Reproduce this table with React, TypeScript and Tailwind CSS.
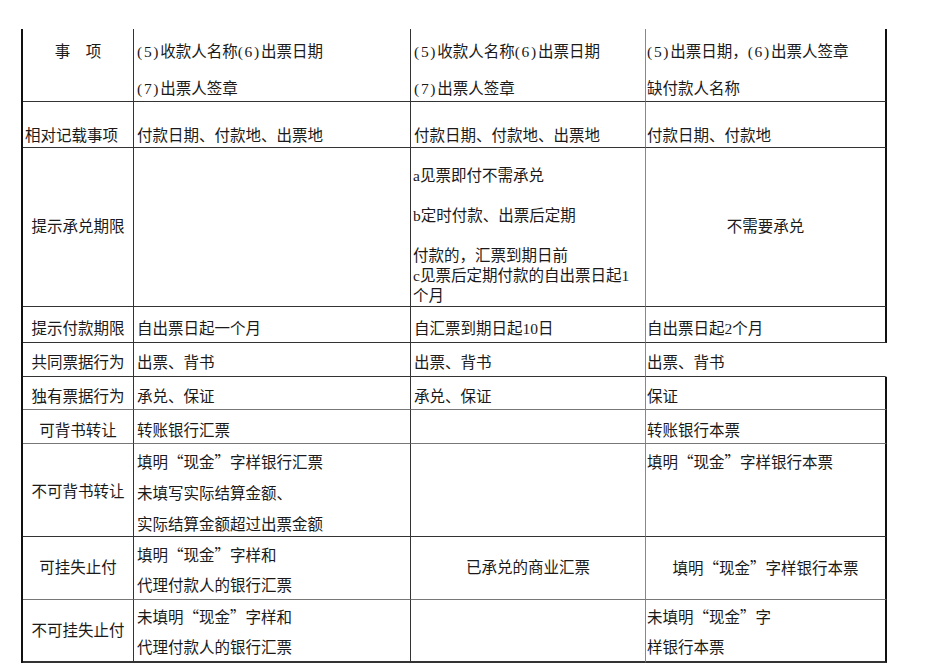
import React from "react";

const Q = ({ c }: { c: string }) => (
  <span className="[font-family:'Noto_Sans_CJK_SC',sans-serif] [font-feature-settings:'fwid']">{c}</span>
);

const P = ({ n }: { n: string }) => (
  <span className="tracking-[1.7px]">({n})</span>
);

const XJ = ({ pre = "", post }: { pre?: string; post: string }) => (
  <>
    {pre}
    <Q c="“" />现金<Q c="”" />
    {post}
  </>
);

export default function App() {
  const dk = "border-[#333]";
  return (
    <div className="w-[950px] h-[672px] bg-white overflow-hidden text-[15.5px] text-[#1a1a1a] [font-family:'Liberation_Serif','Noto_Sans_CJK_SC',serif] whitespace-nowrap">
      <div className="ml-[21px] mt-[29px] w-[866px] border-l-2 border-l-[#111] grid grid-cols-[111px_277px_235px_241px] grid-rows-[73px_46px_159px_36px_34px_33px_34px_93px_63px_63px]">
        {/* Row 1 */}
        <div className={`border-r border-b ${dk} flex justify-center pt-[4px] leading-[37px]`}>事　项</div>
        <div className={`border-r border-b ${dk} pl-[3px] pt-[4px] leading-[37px]`}>
          <div><P n="5" />收款人名称<P n="6" />出票日期</div>
          <div><P n="7" />出票人签章</div>
        </div>
        <div className={`border-r border-b border-r-[#888] border-b-[#333] pl-[3px] pt-[4px] leading-[37px]`}>
          <div><P n="5" />收款人名称<P n="6" />出票日期</div>
          <div><P n="7" />出票人签章</div>
        </div>
        <div className={`border-r-2 border-r-[#111] border-b border-b-[#333] pl-[1px] pt-[4px] leading-[37px]`}>
          <div><P n="5" />出票日期，<P n="6" />出票人签章</div>
          <div>缺付款人名称</div>
        </div>

        {/* Row 2 */}
        <div className={`border-r border-b ${dk} flex items-end pl-[2px] pb-[1px] leading-[20px]`}>相对记载事项</div>
        <div className={`border-r border-b ${dk} flex items-end pl-[3px] pb-[1px] leading-[20px]`}>付款日期、付款地、出票地</div>
        <div className="border-r border-b border-r-[#888] border-b-[#333] flex items-end pl-[3px] pb-[1px] leading-[20px]">付款日期、付款地、出票地</div>
        <div className="border-r-2 border-r-[#111] border-b border-b-[#333] flex items-end pl-[1px] pb-[1px] leading-[20px]">付款日期、付款地</div>

        {/* Row 3 */}
        <div className={`border-r border-b ${dk} flex items-center justify-center`}>提示承兑期限</div>
        <div className={`border-r border-b ${dk}`}></div>
        <div className="border-r border-b border-r-[#888] border-b-[#333] flex flex-col justify-end pl-[2px] leading-[20px]">
          <div>a见票即付不需承兑</div>
          <div className="h-[20px]"></div>
          <div>b定时付款、出票后定期</div>
          <div className="h-[20px]"></div>
          <div>付款的，汇票到期日前</div>
          <div>c见票后定期付款的自出票日起1</div>
          <div>个月</div>
        </div>
        <div className="border-r-2 border-r-[#111] border-b border-b-[#333] flex items-center justify-center">不需要承兑</div>

        {/* Row 4 */}
        <div className={`border-r border-b ${dk} flex items-end justify-center pb-[3px] leading-[20px]`}>提示付款期限</div>
        <div className={`border-r border-b ${dk} flex items-end pl-[3px] pb-[3px] leading-[20px]`}>自出票日起一个月</div>
        <div className="border-r border-b border-r-[#888] border-b-[#333] flex items-end pl-[3px] pb-[3px] leading-[20px]">自汇票到期日起10日</div>
        <div className="border-r-2 border-r-[#111] border-b border-b-[#333] flex items-end pl-[1px] pb-[3px] leading-[20px]">自出票日起2个月</div>

        {/* Row 5 */}
        <div className={`border-r border-b ${dk} flex items-end justify-center pb-[3px] leading-[20px]`}>共同票据行为</div>
        <div className={`border-r border-b ${dk} flex items-end pl-[3px] pb-[3px] leading-[20px]`}>出票、背书</div>
        <div className="border-r border-b border-r-[#888] border-b-[#333] flex items-end pl-[3px] pb-[3px] leading-[20px]">出票、背书</div>
        <div className="border-r-2 border-r-transparent border-b border-b-[#333] flex items-end pl-[1px] pb-[3px] leading-[20px]">出票、背书</div>

        {/* Row 6 */}
        <div className="border-r border-b border-r-[#333] border-b-[#777] flex items-end justify-center pb-[2px] leading-[20px]">独有票据行为</div>
        <div className="border-r border-b border-r-[#333] border-b-[#777] flex items-end pl-[3px] pb-[2px] leading-[20px]">承兑、保证</div>
        <div className="border-r border-b border-r-[#888] border-b-[#777] flex items-end pl-[3px] pb-[2px] leading-[20px]">承兑、保证</div>
        <div className="border-r-2 border-r-[#111] border-b border-b-[#777] flex items-end pl-[1px] pb-[2px] leading-[20px]">保证</div>

        {/* Row 7 */}
        <div className="border-r border-b border-r-[#333] border-b-[#777] flex items-end justify-center pb-[2px] leading-[20px]">可背书转让</div>
        <div className="border-r border-b border-r-[#333] border-b-[#777] flex items-end pl-[3px] pb-[2px] leading-[20px]">转账银行汇票</div>
        <div className="border-r border-b border-r-[#888] border-b-[#777]"></div>
        <div className="border-r-2 border-r-[#111] border-b border-b-[#777] flex items-end pl-[1px] pb-[2px] leading-[20px]">转账银行本票</div>

        {/* Row 8 */}
        <div className={`border-r border-b ${dk} flex items-center justify-center pt-[4px]`}>不可背书转让</div>
        <div className={`border-r border-b ${dk} pl-[3px] pt-[2px] leading-[31px]`}>
          <div><XJ pre="填明" post="字样银行汇票" /></div>
          <div>未填写实际结算金额、</div>
          <div>实际结算金额超过出票金额</div>
        </div>
        <div className="border-r border-b border-r-[#888] border-b-[#333]"></div>
        <div className="border-r-2 border-r-[#111] border-b border-b-[#333] pl-[1px] pt-[2px] leading-[31px]">
          <div><XJ pre="填明" post="字样银行本票" /></div>
        </div>

        {/* Row 9 */}
        <div className="border-r border-b border-r-[#333] border-b-[#777] flex items-center justify-center">可挂失止付</div>
        <div className="border-r border-b border-r-[#333] border-b-[#777] pl-[3px] pt-[2px] leading-[30px]">
          <div><XJ pre="填明" post="字样和" /></div>
          <div>代理付款人的银行汇票</div>
        </div>
        <div className="border-r border-b border-r-[#888] border-b-[#777] flex items-center justify-center">已承兑的商业汇票</div>
        <div className="border-r-2 border-r-[#111] border-b border-b-[#777] flex items-center justify-center"><span><XJ pre="填明" post="字样银行本票" /></span></div>

        {/* Row 10 */}
        <div className={`border-r border-b-2 ${dk} flex items-center justify-center`}>不可挂失止付</div>
        <div className={`border-r border-b-2 ${dk} pl-[3px] pt-[1px] leading-[30px]`}>
          <div><XJ pre="未填明" post="字样和" /></div>
          <div>代理付款人的银行汇票</div>
        </div>
        <div className="border-r border-b-2 border-r-[#888] border-b-[#333]"></div>
        <div className="border-r-2 border-r-[#111] border-b-2 border-b-[#333] pl-[1px] pt-[1px] leading-[30px]">
          <div><XJ pre="未填明" post="字" /></div>
          <div>样银行本票</div>
        </div>
      </div>
    </div>
  );
}
